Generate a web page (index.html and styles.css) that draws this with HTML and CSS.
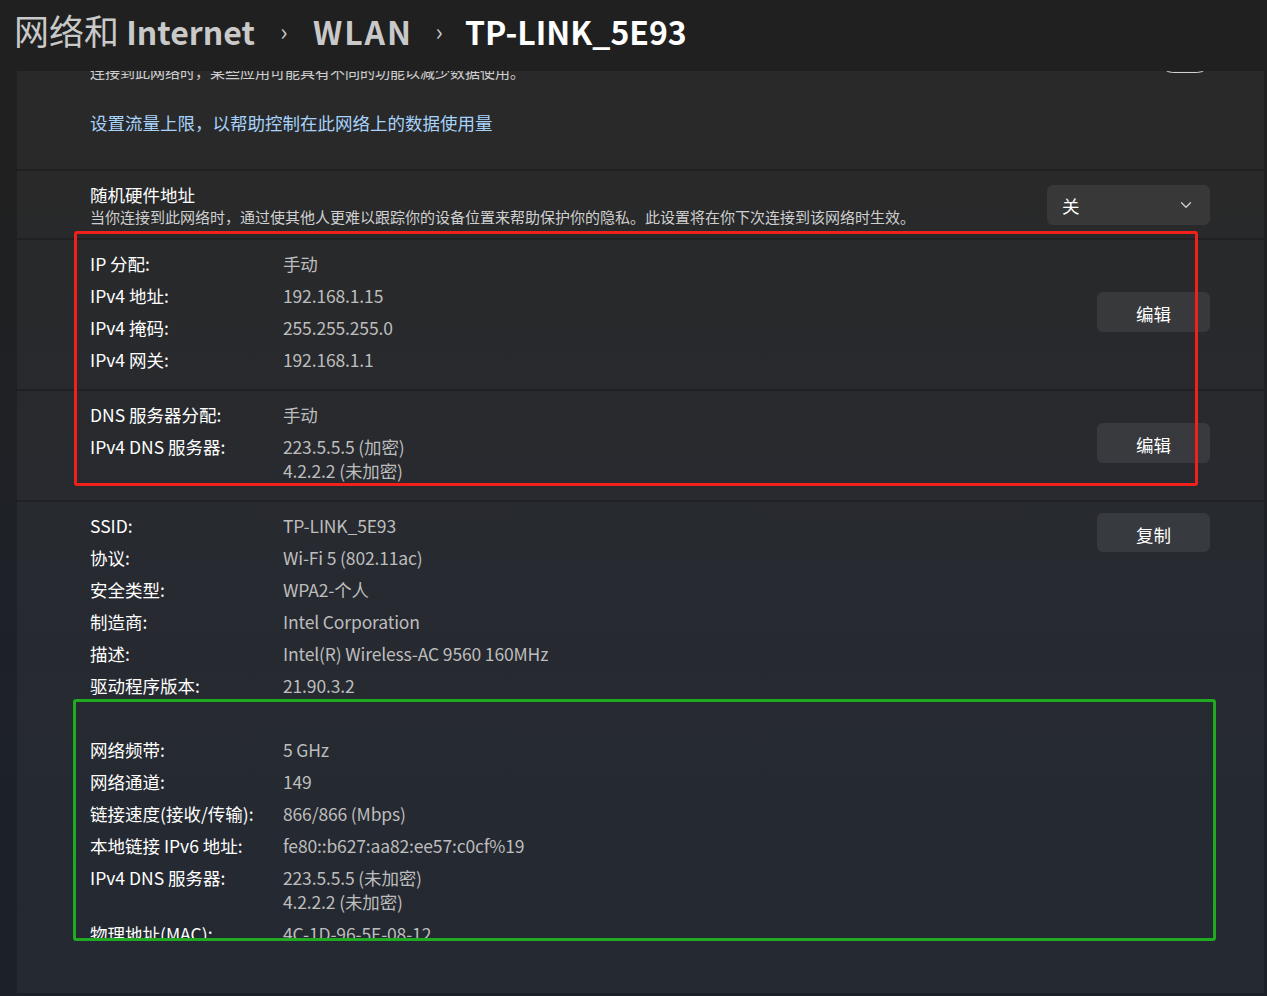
FILE: index.html
```html
<!DOCTYPE html>
<html lang="zh-CN">
<head>
<meta charset="utf-8">
<title>TP-LINK_5E93</title>
<link rel="stylesheet" href="styles.css">
</head>
<body>
<header class="topbar">
  <nav class="crumbs">
    <span class="crumb"><span class="cjk">网络和</span> Internet</span>
    <span class="sep">›</span>
    <span class="crumb wlan">WLAN</span>
    <span class="sep sep-last">›</span>
    <span class="crumb current">TP-LINK_5E93</span>
  </nav>
</header>
<main class="viewport">
  <section class="card metered">
    <div class="metered-top">
      <div class="setting-text">
        <div class="setting-title">按流量计费的连接</div>
        <div class="caption">连接到此网络时，某些应用可能具有不同的功能以减少数据使用。</div>
      </div>
      <span class="toggle"></span>
    </div>
    <a class="link">设置流量上限，以帮助控制在此网络上的数据使用量</a>
  </section>

  <section class="card setting">
    <div class="setting-text">
      <div class="setting-title">随机硬件地址</div>
      <div class="caption">当你连接到此网络时，通过使其他人更难以跟踪你的设备位置来帮助保护你的隐私。此设置将在你下次连接到该网络时生效。</div>
    </div>
    <div class="select">
      <span>关</span>
      <svg class="chev" width="12" height="8" viewBox="0 0 12 8"><path d="M1.5 1.8 L6 6.2 L10.5 1.8" fill="none" stroke="#cfcfcf" stroke-width="1.3" stroke-linecap="round" stroke-linejoin="round"/></svg>
    </div>
  </section>

  <section class="card props centered">
    <dl class="grid">
      <dt>IP 分配:</dt><dd>手动</dd>
      <dt>IPv4 地址:</dt><dd>192.168.1.15</dd>
      <dt>IPv4 掩码:</dt><dd>255.255.255.0</dd>
      <dt>IPv4 网关:</dt><dd>192.168.1.1</dd>
    </dl>
    <button class="btn">编辑</button>
  </section>

  <section class="card props centered">
    <dl class="grid">
      <dt>DNS 服务器分配:</dt><dd>手动</dd>
      <dt>IPv4 DNS 服务器:</dt><dd>223.5.5.5 (加密)<br>4.2.2.2 (未加密)</dd>
    </dl>
    <button class="btn">编辑</button>
  </section>

  <section class="card props details">
    <div class="clip">
      <dl class="grid">
        <dt>SSID:</dt><dd>TP-LINK_5E93</dd>
        <dt>协议:</dt><dd>Wi-Fi 5 (802.11ac)</dd>
        <dt>安全类型:</dt><dd>WPA2-个人</dd>
        <dt>制造商:</dt><dd>Intel Corporation</dd>
        <dt>描述:</dt><dd>Intel(R) Wireless-AC 9560 160MHz</dd>
        <dt>驱动程序版本:</dt><dd>21.90.3.2</dd>
        <dt class="blank">&nbsp;</dt><dd class="blank">&nbsp;</dd>
        <dt>网络频带:</dt><dd>5 GHz</dd>
        <dt>网络通道:</dt><dd>149</dd>
        <dt>链接速度(接收/传输):</dt><dd>866/866 (Mbps)</dd>
        <dt>本地链接 IPv6 地址:</dt><dd>fe80::b627:aa82:ee57:c0cf%19</dd>
        <dt>IPv4 DNS 服务器:</dt><dd>223.5.5.5 (未加密)<br>4.2.2.2 (未加密)</dd>
        <dt>物理地址(MAC):</dt><dd>4C-1D-96-5E-08-12</dd>
      </dl>
    </div>
    <button class="btn">复制</button>
  </section>
</main>
<div class="mark mark-red"></div>
<div class="mark mark-green"></div>
</body>
</html>
```
FILE: styles.css
```css
* { box-sizing: border-box; margin: 0; padding: 0; }

html, body { width: 1267px; height: 996px; }

body {
  position: relative;
  overflow: hidden;
  display: flex;
  flex-direction: column;
  background: linear-gradient(180deg, #202020 0px, #202020 140px, #1e2127 560px, #1b2029 996px);
  font-family: "Noto Sans CJK SC", "Noto Sans", sans-serif;
  color: #ffffff;
}

/* ---------- header ---------- */
.topbar {
  flex: none;
  height: 71px;
  background: #202020;
  display: flex;
  align-items: center;
  padding: 0 0 10px 14px;
  position: relative;
  z-index: 2;
}

.crumbs {
  display: flex;
  align-items: center;
  font-size: 32px;
  line-height: 44px;
  font-weight: 600;
  color: #c9c9c9;
  white-space: nowrap;
}

.crumbs .cjk {
  font-size: 35px;
  font-weight: 400;
}

.crumbs .wlan { letter-spacing: 2px; }

.crumbs .sep {
  font-size: 24px;
  font-weight: 400;
  width: 58px;
  text-align: center;
  color: #c9c9c9;
}

.crumbs .sep-last { width: 52px; }

.crumbs .current { color: #ffffff; }

/* ---------- scrolling area ---------- */
.viewport {
  flex: 1;
  overflow: hidden;
  padding: 0 3px 0 17px;
  display: flex;
  flex-direction: column;
}

.card {
  background: rgba(255, 255, 255, 0.045);
  margin-bottom: 2px;
  padding: 0 54px 0 73px;
}

/* metered card (partly scrolled under the header) */
.metered {
  margin-top: -45px;
  padding-top: 12px;
  padding-bottom: 34px;
}

.metered-top {
  display: flex;
  align-items: center;
  justify-content: space-between;
}

.setting-text { display: flex; flex-direction: column; }

.setting-title {
  font-size: 17.5px;
  line-height: 24px;
  color: #ffffff;
}

.caption {
  font-size: 15px;
  line-height: 20px;
  color: #cfcfcf;
}

.toggle {
  width: 50px;
  height: 25px;
  border: 1px solid #d2d2d2;
  border-radius: 13px;
}

.link {
  display: block;
  margin-top: 29px;
  font-size: 17.5px;
  line-height: 24px;
  color: #a7d3fb;
}

/* random hardware address */
.setting {
  display: flex;
  align-items: center;
  justify-content: space-between;
  padding-top: 12px;
  padding-bottom: 11px;
}

.select {
  width: 163px;
  height: 40px;
  border-radius: 6px;
  background: rgba(255, 255, 255, 0.075);
  display: flex;
  align-items: center;
  justify-content: space-between;
  padding: 0 18px 0 15px;
  font-size: 17.5px;
  color: #ffffff;
}

/* property groups */
.props {
  display: flex;
  justify-content: space-between;
  padding-top: 12px;
  padding-bottom: 17px;
}

.props.centered { align-items: center; }

.grid {
  display: grid;
  grid-template-columns: 193px auto;
  row-gap: 8px;
  font-size: 17.5px;
  line-height: 24px;
  align-content: start;
}

.grid dt { color: #ffffff; white-space: nowrap; }
.grid dd { color: #bdbdbd; white-space: nowrap; letter-spacing: -0.15px; }

.btn {
  flex: none;
  width: 113px;
  height: 40px;
  border: none;
  border-radius: 6px;
  background: rgba(255, 255, 255, 0.08);
  color: #ffffff;
  font-family: inherit;
  font-size: 17.5px;
  line-height: 40px;
  padding-top: 2px;
}

.details {
  flex: 1;
  align-items: flex-start;
  margin-bottom: 3px;
}

.details .clip {
  height: 426px;
  overflow: hidden;
}

.details .btn { height: 39px; margin-top: -1px; }

/* annotation frames */
.mark {
  position: absolute;
  border: 3px solid;
  border-radius: 3px;
  pointer-events: none;
}

.mark-red {
  left: 74px;
  top: 231px;
  width: 1124px;
  height: 255px;
  border-color: #f0201b;
}

.mark-green {
  left: 73px;
  top: 699px;
  width: 1143px;
  height: 242px;
  border-color: #1faa22;
}
```
